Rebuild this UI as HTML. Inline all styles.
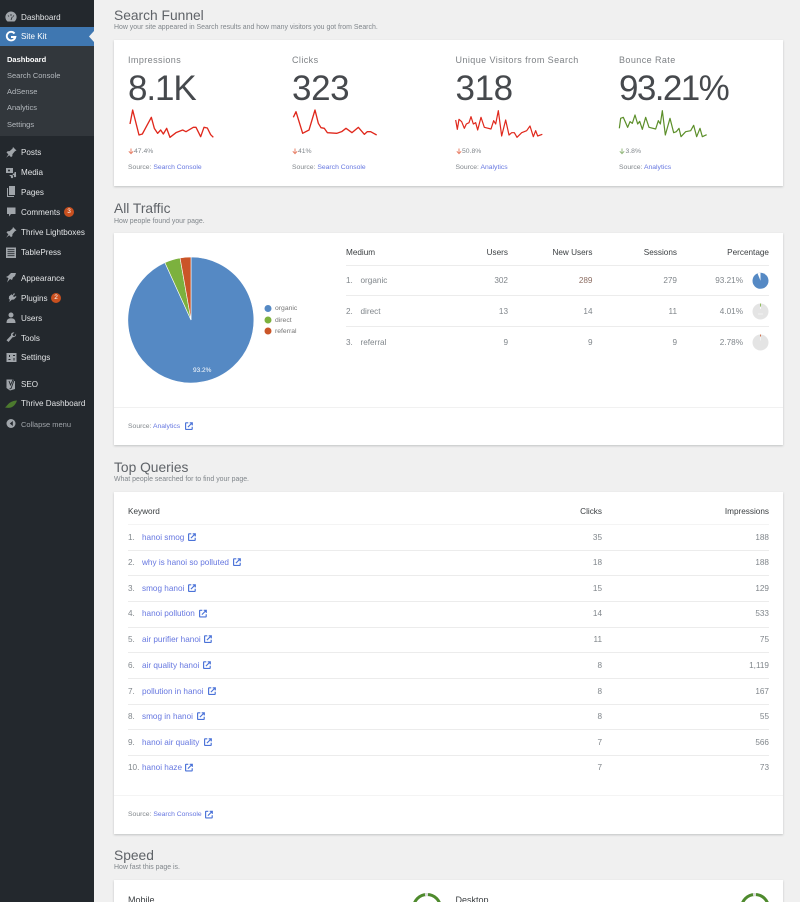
<!DOCTYPE html>
<html><head><meta charset="utf-8"><title>Site Kit Dashboard</title>
<style>
html,body{margin:0;padding:0;width:800px;height:902px;overflow:hidden}
body{font-family:"Liberation Sans",sans-serif;background:#f0f0f0}
#w{position:relative;width:800px;height:902px;overflow:hidden;background:#f0f0f0}
.t{position:absolute;white-space:nowrap;line-height:12px;height:12px;margin-top:.6px}
.r{text-align:right}
.m{color:#e2e4e6;font-size:8.1px;left:21px}
.s{color:#b4b9be;font-size:7.5px;left:7px}
.card{position:absolute;left:114px;width:669px;background:#fff;box-shadow:0 1px 2px rgba(60,64,67,.25)}
.h{color:#5f6368;font-size:13.8px;left:114px}
.sub{color:#80868b;font-size:6.95px;left:114px}
.mh{color:#7d8185;font-size:9px;letter-spacing:.42px}
.big{color:#46494d;font-size:35px;letter-spacing:-1.1px;line-height:40px;height:40px}
.pc{color:#80868b;font-size:6.8px}
.src{color:#80868b;font-size:6.8px}
.src span,.lnk{color:#6677e0}
.th{color:#3c4043;font-size:8.2px}
.td{color:#80868b;font-size:8.2px}
.lnk{font-size:8.2px;left:142px}
.ln{position:absolute;height:1px;background:#ececec}
svg{position:absolute;display:block;overflow:visible}
.bd{position:absolute;width:10px;height:10px;border-radius:50%;background:#c9501f;color:#fff;font-size:6.5px;line-height:10px;text-align:center}
</style></head><body><div id="w">
<div style="position:absolute;left:0;top:0;width:94px;height:902px;background:#23282d"></div>
<div style="position:absolute;left:0;top:46px;width:94px;height:90px;background:#32373c"></div>
<div style="position:absolute;left:0;top:27px;width:94px;height:19px;background:#3f77b1"></div>
<svg style="left:89px;top:31px" width="5" height="11"><path d="M5 0L0 5.500 5 11z" fill="#f0f0f0"/></svg>

<svg width="94" height="440" style="left:0;top:0" fill="#a0a5aa">
<!-- dashboard --><path d="M7.500 21.500A5.600 5.600 0 1 1 14.500 21.500z"/><path d="M11 14v2M8 15.500l1 1M14 15.500l-1 1M11 20l1.300-3.300" stroke="#23282d" stroke-width=".8"/>
<!-- G -->
<path d="M14.500 33.500A4.300 4.300 0 1 0 15.300 37H11" fill="none" stroke="#fff" stroke-width="1.900"/>
<!-- posts pin -->
<path d="M13 147l3.500 3.500-1.500.6-2.500 3-.2 2-1.300 1-1.800-1.800-3 2.500 2.200-3.400-1.900-1.900 1.100-1.200 2-.2 2.900-2.500z"/>
<!-- media -->
<path d="M6 168h7v5H6z"/><path d="M9 175h7v-3h-1.500v1.500l-1.800 .3v2.500h-2z"/><circle cx="9" cy="170.500" r="1" fill="#23282d"/><circle cx="12" cy="177" r="1.200"/><circle cx="15" cy="176" r="1.200"/>
<!-- pages -->
<path d="M9 186h6v9H9z"/><path d="M7 188h1v8h6v1H7z"/>
<!-- comments -->
<path d="M7 207.500h8.500v6.500H11l-2 2.500V214H7z"/>
<!-- lightboxes pin -->
<path d="M13 227l3.500 3.500-1.500.6-2.500 3-.2 2-1.300 1-1.800-1.800-3 2.500 2.200-3.400-1.900-1.900 1.100-1.200 2-.2 2.900-2.500z"/>
<!-- tablepress -->
<path d="M6 247.500h10v10.500H6z"/><path d="M7.500 249.700h7M7.500 251.700h7M7.500 253.700h7M7.500 255.700h7" stroke="#23282d" stroke-width=".8"/>
<!-- appearance -->
<path d="M11 273l5 0-1 3-2 1.500-1 2.500-2-1-3 3.500 1.500-4.500L6 277l2-1z"/>
<!-- plugins -->
<path d="M14 293l1 1-2 2 1 1 2-1 .4 1-2.400 2.500-2.300 .3-1.200 1.200-1.500 .9 1-2-1.200-1.200.3-2.500 2.500-2 1 1z"/>
<!-- users -->
<circle cx="11" cy="315" r="2.500"/><path d="M6.500 323c0-3.500 1.500-4.800 4.500-4.800s4.500 1.300 4.500 4.800z"/>
<!-- tools -->
<path d="M16 333.500c.5 2-1 4-3.300 3.600L8.500 342l-2-1.800 4.500-4.700c-.4-2 1.500-3.600 3.400-3l-2 2 .8 1.200 1.300.5z"/>
<!-- settings -->
<path d="M6.500 353h10v9h-10z"/><path d="M8.500 359.500h2M9.500 355v2M13 355.500h2M14 358v2.500" stroke="#23282d" stroke-width="1"/>
<!-- seo -->
<path d="M6.500 379.500h7.500l-.5 1.500h1.500v8l-5 1.500-3.500-2.500z"/><path d="M9 381l1.500 4 3-6.500 1 .5-3.500 9.500-1.500 .5" stroke="#23282d" stroke-width=".9" fill="none"/>
<!-- leaf -->
<path d="M5 407.500c2-1.500 3-4 6-5.500 2-1 4-1.500 6-1.500-1 3-3 6-6 7-2 .7-4 .3-6 0z" fill="#4c7a2e"/>
<!-- collapse -->
<circle cx="11" cy="423.500" r="4.500"/><path d="M12.800 421l-3 2.500 3 2.500z" fill="#23282d"/>
</svg>

<div class="t m" style="top:11px">Dashboard</div>
<div class="t m" style="top:30.500px;color:#fff">Site Kit</div>
<div class="t s" style="top:53.500px;color:#fff;font-weight:bold">Dashboard</div>
<div class="t s" style="top:69.500px">Search Console</div>
<div class="t s" style="top:85.500px">AdSense</div>
<div class="t s" style="top:101.500px">Analytics</div>
<div class="t s" style="top:118px">Settings</div>
<div class="t m" style="top:146.500px">Posts</div>
<div class="t m" style="top:166px">Media</div>
<div class="t m" style="top:186px">Pages</div>
<div class="t m" style="top:206px">Comments</div><div class="bd" style="left:64px;top:207px">3</div>
<div class="t m" style="top:226px">Thrive Lightboxes</div>
<div class="t m" style="top:246px">TablePress</div>
<div class="t m" style="top:272px">Appearance</div>
<div class="t m" style="top:292px">Plugins</div><div class="bd" style="left:51px;top:293px">2</div>
<div class="t m" style="top:312px">Users</div>
<div class="t m" style="top:332px">Tools</div>
<div class="t m" style="top:351.500px">Settings</div>
<div class="t m" style="top:378px">SEO</div>
<div class="t m" style="top:397.500px">Thrive Dashboard</div>
<div class="t m" style="top:418px;color:#a0a5aa;font-size:7.500px">Collapse menu</div>

<!-- Search Funnel -->
<div class="t h" style="top:9px">Search Funnel</div>
<div class="t sub" style="top:21.500px">How your site appeared in Search results and how many visitors you got from Search.</div>
<div class="card" style="top:40px;height:146px"></div>
<div class="t mh" style="left:128px;top:53px">Impressions</div>
<div class="t mh" style="left:292px;top:53px">Clicks</div>
<div class="t mh" style="left:455.500px;top:53px">Unique Visitors from Search</div>
<div class="t mh" style="left:619px;top:53px">Bounce Rate</div>
<div class="t big" style="left:128px;top:68px">8.1K</div>
<div class="t big" style="left:292px;top:68px;letter-spacing:-.4px">323</div>
<div class="t big" style="left:455.500px;top:68px;letter-spacing:-.4px">318</div>
<div class="t big" style="left:619px;top:68px;letter-spacing:-1.600px">93.21%</div>
<svg style="left:110px;top:0" width="345" height="190" viewBox="0 0 1035 570" fill="none" stroke="#e0281c" stroke-width="4" stroke-linejoin="round">
<polyline points="60,372 68,330 87,405 97,402 124,352 133,385 143,400 152,390 160,402 170,385 180,412 198,398 218,390 228,395 250,382 258,382 272,410 282,382 292,384 302,404 310,412"/>
<polyline points="550,352 558,335 578,400 597,390 615,330 625,370 633,383 643,385 652,398 680,400 695,395 708,385 726,398 745,382 763,403 772,395 782,395 800,405"/>
</svg>
<svg style="left:445px;top:0" width="345" height="190" viewBox="0 0 1035 570" fill="none" stroke-width="3.600" stroke-linejoin="round">
<polyline stroke="#e0281c" points="32,360 37,388 42,358 50,365 58,385 64,372 72,368 78,350 85,372 92,368 98,390 108,352 118,382 138,387 146,362 152,372 160,332 170,408 182,360 192,405 200,398 208,398 216,412 230,398 245,392 255,378 265,410 272,392 278,408 292,403"/>
<polyline stroke="#5c8f2a" points="523,385 527,355 535,352 548,382 555,365 562,370 570,345 578,372 584,364 592,388 602,352 612,382 632,387 640,362 646,372 652,332 661,405 675,355 686,398 694,395 702,385 708,410 722,395 737,392 746,376 755,410 765,385 772,410 785,404"/>
</svg>
<svg style="left:128px;top:148px" width="6" height="7"><path d="M3 .5v5M.8 3.300L3 5.600l2.200-2.300" fill="none" stroke="#e8826a" stroke-width="1"/></svg>
<svg style="left:292px;top:148px" width="6" height="7"><path d="M3 .5v5M.8 3.300L3 5.600l2.200-2.300" fill="none" stroke="#e8826a" stroke-width="1"/></svg>
<svg style="left:455.500px;top:148px" width="6" height="7"><path d="M3 .5v5M.8 3.300L3 5.600l2.200-2.300" fill="none" stroke="#e8826a" stroke-width="1"/></svg>
<svg style="left:619px;top:148px" width="6" height="7"><path d="M3 .5v5M.8 3.300L3 5.600l2.200-2.300" fill="none" stroke="#95b97e" stroke-width="1"/></svg>
<div class="t pc" style="left:134px;top:145.500px">47.4%</div>
<div class="t pc" style="left:298px;top:145.500px">41%</div>
<div class="t pc" style="left:462px;top:145.500px">50.8%</div>
<div class="t pc" style="left:625.500px;top:145.500px">3.8%</div>
<div class="t src" style="left:128px;top:161px">Source: <span>Search Console</span></div>
<div class="t src" style="left:292px;top:161px">Source: <span>Search Console</span></div>
<div class="t src" style="left:455.500px;top:161px">Source: <span>Analytics</span></div>
<div class="t src" style="left:619px;top:161px">Source: <span>Analytics</span></div>

<!-- All Traffic -->
<div class="t h" style="top:202.500px">All Traffic</div>
<div class="t sub" style="top:215px">How people found your page.</div>
<div class="card" style="top:233px;height:212px"></div>
<!-- Top Queries -->
<div class="t h" style="top:461px">Top Queries</div>
<div class="t sub" style="top:473.500px">What people searched for to find your page.</div>
<div class="card" style="top:492px;height:342px"></div>
<!-- Speed -->
<div class="t h" style="top:849px">Speed</div>
<div class="t sub" style="top:861.500px">How fast this page is.</div>
<div class="card" style="top:880px;height:40px"></div>

<svg style="left:0;top:0" width="800" height="902">
<path d="M191 320V257A63 63 0 1 1 164.900 262.600z" fill="#5589c4" stroke="#fff" stroke-width=".6"/>
<path d="M191 320L164.900 262.600A63 63 0 0 1 180.050 257.960z" fill="#7cb13e" stroke="#fff" stroke-width=".6"/>
<path d="M191 320L180.050 257.960A63 63 0 0 1 191 257z" fill="#ca5528" stroke="#fff" stroke-width=".6"/>
<circle cx="268" cy="308.500" r="3.500" fill="#5589c4"/><circle cx="268" cy="320" r="3.500" fill="#7cb13e"/><circle cx="268" cy="331" r="3.500" fill="#ca5528"/>
<circle cx="760.500" cy="280.800" r="8" fill="#5589c4"/><path d="M760.500 280.800L757.500 273.400A8 8 0 0 1 760.500 272.800z" fill="#fff"/>
<circle cx="760.500" cy="311.500" r="8" fill="#e4e4e4"/><path d="M760.500 303.500v3" stroke="#7cb13e" stroke-width=".8"/><path d="M760.500 307v2" stroke="#fff" stroke-width=".8"/><path d="M758 314h5" stroke="#f2f2f2" stroke-width="1"/>
<circle cx="760.500" cy="342.500" r="8" fill="#e4e4e4"/><path d="M760.500 334.500v2" stroke="#ca5528" stroke-width=".8"/><path d="M760.500 336.500v4" stroke="#f5f5f5" stroke-width=".8"/>
<symbol id="x" viewBox="0 0 8 8"><path d="M3.300.8H1a.4.4 0 0 0-.4.4v5.800a.4.4 0 0 0 .4.4h5.800a.4.4 0 0 0 .4-.4V4.700M2.900 5.100L7 1M4.700.8h2.600v2.600" fill="none" stroke="#4a72d8" stroke-width="1.150"/></symbol>
<use href="#x" x="185" y="422" width="8" height="8"/>
<use href="#x" x="188" y="533" width="8" height="8"/>
<use href="#x" x="233" y="558" width="8" height="8"/>
<use href="#x" x="188" y="584" width="8" height="8"/>
<use href="#x" x="199" y="609.500" width="8" height="8"/>
<use href="#x" x="204" y="635" width="8" height="8"/>
<use href="#x" x="203" y="661" width="8" height="8"/>
<use href="#x" x="208" y="687" width="8" height="8"/>
<use href="#x" x="197" y="712" width="8" height="8"/>
<use href="#x" x="204" y="738" width="8" height="8"/>
<use href="#x" x="185" y="763.500" width="8" height="8"/>
<use href="#x" x="205" y="810.500" width="8" height="8"/>
<g fill="none" stroke-width="3">
<circle cx="427" cy="908" r="13.500" stroke="#4e8a2d"/><path d="M425 894.600a13.500 13.500 0 0 1 3-.1" stroke="#ddd"/>
<circle cx="755" cy="908" r="13.500" stroke="#4e8a2d"/><path d="M753 894.600a13.500 13.500 0 0 1 3-.1" stroke="#ddd"/>
</g>
</svg>
<div class="t" style="left:193px;top:364px;color:#fff;font-size:6.500px">93.2%</div>
<div class="t" style="left:275px;top:302.500px;color:#757575;font-size:6.800px">organic</div>
<div class="t" style="left:275px;top:314px;color:#757575;font-size:6.800px">direct</div>
<div class="t" style="left:275px;top:325px;color:#757575;font-size:6.800px">referral</div>
<div class="t th" style="left:346px;top:246px">Medium</div>
<div class="t th r" style="left:448px;width:60px;top:246px">Users</div>
<div class="t th r" style="left:532.500px;width:60px;top:246px">New Users</div>
<div class="t th r" style="left:617px;width:60px;top:246px">Sessions</div>
<div class="t th r" style="left:709px;width:60px;top:246px">Percentage</div>
<div class="ln" style="left:346px;width:423px;top:265px"></div>
<div class="ln" style="left:346px;width:423px;top:295px"></div>
<div class="ln" style="left:346px;width:423px;top:326px"></div>
<div class="t td" style="left:346px;top:274px">1.</div><div class="t td" style="left:360.500px;top:274px">organic</div>
<div class="t td r" style="left:448px;width:60px;top:274px">302</div><div class="t td r" style="left:532.500px;width:60px;top:274px;color:#8d6e63">289</div><div class="t td r" style="left:617px;width:60px;top:274px">279</div><div class="t td r" style="left:683px;width:60px;top:274.500px">93.21%</div>
<div class="t td" style="left:346px;top:305px">2.</div><div class="t td" style="left:360.500px;top:305px">direct</div>
<div class="t td r" style="left:448px;width:60px;top:305px">13</div><div class="t td r" style="left:532.500px;width:60px;top:305px">14</div><div class="t td r" style="left:617px;width:60px;top:305px">11</div><div class="t td r" style="left:683px;width:60px;top:305.500px">4.01%</div>
<div class="t td" style="left:346px;top:336px">3.</div><div class="t td" style="left:360.500px;top:336px">referral</div>
<div class="t td r" style="left:448px;width:60px;top:336px">9</div><div class="t td r" style="left:532.500px;width:60px;top:336px">9</div><div class="t td r" style="left:617px;width:60px;top:336px">9</div><div class="t td r" style="left:683px;width:60px;top:336.500px">2.78%</div>
<div class="ln" style="left:114px;width:669px;top:407px;background:#f1f1f1"></div>
<div class="t src" style="left:128px;top:420px">Source: <span>Analytics</span></div>

<div class="t th" style="left:128px;top:505px">Keyword</div>
<div class="t th r" style="left:542px;width:60px;top:505px">Clicks</div>
<div class="t th r" style="left:699px;width:70px;top:505px">Impressions</div>
<div class="ln" style="left:128px;width:641px;top:524px;background:#f4f4f4"></div>
<div class="ln" style="left:128px;width:641px;top:549.500px"></div>
<div class="ln" style="left:128px;width:641px;top:575px"></div>
<div class="ln" style="left:128px;width:641px;top:601px"></div>
<div class="ln" style="left:128px;width:641px;top:626.500px"></div>
<div class="ln" style="left:128px;width:641px;top:652px"></div>
<div class="ln" style="left:128px;width:641px;top:678px"></div>
<div class="ln" style="left:128px;width:641px;top:703.500px"></div>
<div class="ln" style="left:128px;width:641px;top:729px"></div>
<div class="ln" style="left:128px;width:641px;top:755px"></div>

<div class="t td" style="left:128px;top:531px">1.</div><div class="t lnk" style="top:531px">hanoi smog</div><div class="t td r" style="left:542px;width:60px;top:531px">35</div><div class="t td r" style="left:699px;width:70px;top:531px">188</div>
<div class="t td" style="left:128px;top:556px">2.</div><div class="t lnk" style="top:556px">why is hanoi so polluted</div><div class="t td r" style="left:542px;width:60px;top:556px">18</div><div class="t td r" style="left:699px;width:70px;top:556px">188</div>
<div class="t td" style="left:128px;top:582px">3.</div><div class="t lnk" style="top:582px">smog hanoi</div><div class="t td r" style="left:542px;width:60px;top:582px">15</div><div class="t td r" style="left:699px;width:70px;top:582px">129</div>
<div class="t td" style="left:128px;top:607.500px">4.</div><div class="t lnk" style="top:607.500px">hanoi pollution</div><div class="t td r" style="left:542px;width:60px;top:607.500px">14</div><div class="t td r" style="left:699px;width:70px;top:607.500px">533</div>
<div class="t td" style="left:128px;top:633px">5.</div><div class="t lnk" style="top:633px">air purifier hanoi</div><div class="t td r" style="left:542px;width:60px;top:633px">11</div><div class="t td r" style="left:699px;width:70px;top:633px">75</div>
<div class="t td" style="left:128px;top:659px">6.</div><div class="t lnk" style="top:659px">air quality hanoi</div><div class="t td r" style="left:542px;width:60px;top:659px">8</div><div class="t td r" style="left:699px;width:70px;top:659px">1,119</div>
<div class="t td" style="left:128px;top:685px">7.</div><div class="t lnk" style="top:685px">pollution in hanoi</div><div class="t td r" style="left:542px;width:60px;top:685px">8</div><div class="t td r" style="left:699px;width:70px;top:685px">167</div>
<div class="t td" style="left:128px;top:710px">8.</div><div class="t lnk" style="top:710px">smog in hanoi</div><div class="t td r" style="left:542px;width:60px;top:710px">8</div><div class="t td r" style="left:699px;width:70px;top:710px">55</div>
<div class="t td" style="left:128px;top:736px">9.</div><div class="t lnk" style="top:736px">hanoi air quality</div><div class="t td r" style="left:542px;width:60px;top:736px">7</div><div class="t td r" style="left:699px;width:70px;top:736px">566</div>
<div class="t td" style="left:128px;top:761.500px">10.</div><div class="t lnk" style="top:761.500px">hanoi haze</div><div class="t td r" style="left:542px;width:60px;top:761.500px">7</div><div class="t td r" style="left:699px;width:70px;top:761.500px">73</div>
<div class="ln" style="left:114px;width:669px;top:795px;background:#f4f4f4"></div>
<div class="t src" style="left:128px;top:808.500px">Source: <span>Search Console</span></div>

<div class="t" style="left:128px;top:893px;color:#3c4043;font-size:9px">Mobile</div>
<div class="t" style="left:455.500px;top:893px;color:#3c4043;font-size:9px">Desktop</div>
</div></body></html>
